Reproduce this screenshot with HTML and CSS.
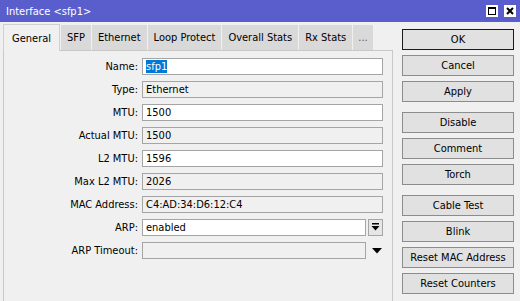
FILE: index.html
```html
<!DOCTYPE html>
<html lang="en">
<head>
  <meta charset="UTF-8">
  <title>Interface &lt;sfp1&gt;</title>
  <link rel="stylesheet" href="styles.css">
</head>
<body>
  <div class="titlebar">
    <span class="title">Interface &lt;sfp1&gt;</span>
    <div class="controls">
      <span class="ctl">
        <svg width="12" height="12" viewBox="0 0 12 12"><rect x="2.5" y="2.5" width="7" height="7" fill="none" stroke="#000"/><line x1="2" y1="3.5" x2="10" y2="3.5" stroke="#000"/></svg>
      </span>
      <span class="ctl">
        <svg width="12" height="12" viewBox="0 0 12 12"><path d="M3 3 L9 9 M9 3 L3 9" stroke="#000" stroke-width="2"/></svg>
      </span>
    </div>
  </div>

  <div class="main">
    <div class="left">
      <!-- tabs -->
      <div class="tabs">
        <div class="tab active">General</div>
        <div class="tab">SFP</div>
        <div class="tab">Ethernet</div>
        <div class="tab">Loop Protect</div>
        <div class="tab">Overall Stats</div>
        <div class="tab">Rx Stats</div>
        <div class="tab more">...</div>
      </div>

      <div class="panel">
        <div class="row">
          <label>Name:</label>
          <div class="field edit"><span class="sel">sfp1</span></div>
        </div>
        <div class="row">
          <label>Type:</label>
          <div class="field">Ethernet</div>
        </div>
        <div class="row">
          <label>MTU:</label>
          <div class="field edit">1500</div>
        </div>
        <div class="row">
          <label>Actual MTU:</label>
          <div class="field">1500</div>
        </div>
        <div class="row">
          <label>L2 MTU:</label>
          <div class="field edit">1596</div>
        </div>
        <div class="row">
          <label>Max L2 MTU:</label>
          <div class="field">2026</div>
        </div>
        <div class="row">
          <label>MAC Address:</label>
          <div class="field">C4:AD:34:D6:12:C4</div>
        </div>
        <div class="row">
          <label>ARP:</label>
          <div class="field edit short">enabled</div>
          <span class="drop">
            <svg width="9" height="9" viewBox="0 0 9 9"><rect x="1" y="0" width="7" height="1.5" fill="#000"/><path d="M0.5 3 L8.5 3 L4.5 7.5 Z" fill="#000"/></svg>
          </span>
        </div>
        <div class="row">
          <label>ARP Timeout:</label>
          <div class="field short"></div>
          <span class="arrow">
            <svg width="10" height="6" viewBox="0 0 10 6"><path d="M0 0 L10 0 L5 5.5 Z" fill="#000"/></svg>
          </span>
        </div>
      </div>
    </div>

    <div class="buttons">
      <div class="group">
        <button class="default">OK</button>
        <button>Cancel</button>
        <button>Apply</button>
      </div>
      <div class="group">
        <button>Disable</button>
        <button>Comment</button>
        <button>Torch</button>
      </div>
      <div class="group">
        <button>Cable Test</button>
        <button>Blink</button>
        <button>Reset MAC Address</button>
        <button>Reset Counters</button>
      </div>
    </div>
  </div>
</body>
</html>
```

FILE: styles.css
```css
body {
  margin: 0;
  width: 520px;
  height: 301px;
  overflow: hidden;
  background: #f0f0f0;
  font-family: "DejaVu Sans Condensed", "DejaVu Sans", sans-serif;
  font-stretch: condensed;
  font-size: 11px;
  color: #000;
}
.titlebar {
  height: 22px;
  background: #5a5ecd;
  color: #fff;
  display: flex;
  align-items: center;
  padding: 0 4px 0 6px;
}
.controls {
  margin-left: auto;
  display: flex;
  gap: 6px;
}
.ctl {
  width: 12px;
  height: 12px;
  background: #fff;
  display: flex;
}
.main {
  display: flex;
  gap: 9px;
}
.left {
  width: 390px;
  margin-left: 3px;
  margin-top: 2px;
}
.tabs {
  display: flex;
  align-items: flex-end;
  height: 26px;
  gap: 1px;
}
.tab {
  height: 25px;
  box-sizing: border-box;
  padding: 0 6px;
  display: flex;
  align-items: center;
  background: #d9d9d9;
}
.tab.active {
  height: 27px;
  padding: 0 8px;
  background: #f0f0f0;
  border: 1px solid #d0d0d0;
  border-bottom: none;
  position: relative;
  z-index: 1;
  margin-bottom: -1px;
}
.tab.more {
  padding: 0 5px;
  color: #555;
}
.panel {
  height: 260px;
  box-sizing: border-box;
  border: 1px solid #c8c8c8;
  padding-top: 7px;
}
.row {
  display: flex;
  align-items: center;
  height: 17px;
  margin-bottom: 6px;
}
.row label {
  width: 134px;
  text-align: right;
  margin-right: 4px;
}
.field {
  width: 241px;
  height: 17px;
  box-sizing: border-box;
  border: 1px solid #a5a5a5;
  background: #f0f0f0;
  padding-left: 3px;
  line-height: 15px;
  white-space: nowrap;
}
.field.edit {
  background: #fff;
}
.field.short {
  width: 224px;
}
.sel {
  background: #0078d7;
  color: #fff;
}
.drop {
  width: 15px;
  height: 17px;
  box-sizing: border-box;
  margin-left: 2px;
  border: 1px solid #a5a5a5;
  background: #e6e6e6;
  display: flex;
  align-items: center;
  justify-content: center;
}
.arrow {
  margin-left: 6px;
  display: flex;
}
.buttons {
  width: 112px;
  margin-top: 7px;
  display: flex;
  flex-direction: column;
  gap: 10px;
}
.group {
  display: flex;
  flex-direction: column;
  gap: 5px;
}
button {
  height: 21px;
  padding: 0;
  font: inherit;
  color: #000;
  background: #e1e1e1;
  border: 1px solid #8c8c8c;
}
button.default {
  border-color: #1a1a1a;
}
```
